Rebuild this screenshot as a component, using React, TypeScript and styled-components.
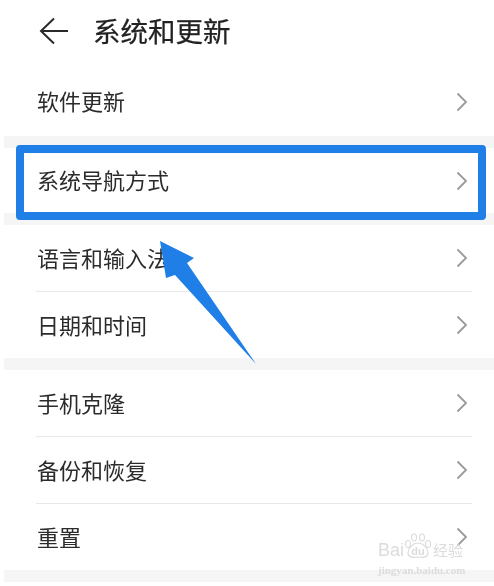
import React from "react";
import styled, { createGlobalStyle } from "styled-components";

const Global = createGlobalStyle`
  html, body { margin: 0; padding: 0; background: #fff; }
  #root { width: 494px; height: 586px; overflow: hidden; }
`;

const Page = styled.div`
  position: relative;
  width: 494px;
  height: 586px;
  background: #fff;
  overflow: hidden;
  font-family: "Noto Sans CJK SC", "Noto Sans", sans-serif;
  color: #262626;
  filter: blur(0.35px);
`;

const Header = styled.header`
  box-sizing: border-box;
  height: 67px;
  display: flex;
  align-items: center;
  padding-left: 39px;
  padding-bottom: 5px;
  gap: 24px;
`;

const Title = styled.h1`
  margin: 0;
  font-size: 27.5px;
  font-weight: 400;
  line-height: 1;
  color: #222;
  -webkit-text-stroke: 0.25px #222;
`;

const Band = styled.div<{ $h: number }>`
  height: ${(p) => p.$h}px;
  margin-left: 4px;
  background: #f5f5f5;
`;

const Row = styled.div<{ $h: number }>`
  position: relative;
  height: ${(p) => p.$h}px;
  display: flex;
  align-items: center;
  justify-content: space-between;
  margin-left: 37px;
  padding-right: 26px;
`;

const Divider = styled.div`
  height: 1px;
  margin-left: 36px;
  margin-right: 22px;
  background: #e8e8e8;
`;

const Label = styled.span`
  font-size: 22px;
  line-height: 1;
  color: #2b2b2b;
  padding-bottom: 3px;
`;

const Highlight = styled.div`
  position: absolute;
  left: -21px;
  right: 8px;
  top: -3px;
  bottom: -7px;
  box-sizing: border-box;
  border: 8px solid #1f7fe6;
  border-radius: 4px;
  pointer-events: none;
`;

const ArrowOverlay = styled.svg`
  position: absolute;
  left: 0;
  top: 0;
  pointer-events: none;
`;

const Watermark = styled.div`
  position: absolute;
  left: 378px;
  top: 533px;
  width: 112px;
  color: #dcdcdc;
  pointer-events: none;
`;

const MarkLine = styled.div`
  display: flex;
  align-items: flex-end;
  height: 26px;
  font-family: "Liberation Sans", sans-serif;
  font-size: 18px;
  line-height: 18px;
  white-space: nowrap;
`;

const MarkCn = styled.span`
  font-family: "Noto Sans CJK SC", sans-serif;
  font-size: 15px;
  line-height: 18px;
  margin-left: 1px;
`;

const MarkUrl = styled.div`
  font-family: "Liberation Serif", serif;
  font-size: 11px;
  font-weight: 700;
  line-height: 12px;
  margin-top: 5px;
  white-space: nowrap;
`;

const Chevron = () => (
  <svg width="12" height="20" viewBox="0 0 12 20" fill="none">
    <path d="M1.5 1.5l8.5 8.5-8.5 8.5" stroke="#9a9a9a" strokeWidth="1.8" />
  </svg>
);

const Back = () => (
  <svg width="30" height="28" viewBox="0 0 30 28" fill="none">
    <path d="M15 1.5L2 14l13 12.5M2 14h27" stroke="#2a2a2a" strokeWidth="2" />
  </svg>
);

const Paw = () => (
  <svg width="28" height="26" viewBox="0 0 28 26" fill="none" stroke="#dcdcdc" strokeWidth="1.2">
    <ellipse cx="4" cy="11" rx="2.5" ry="3.5" />
    <ellipse cx="10" cy="4.5" rx="2.5" ry="3.5" />
    <ellipse cx="18" cy="4.5" rx="2.5" ry="3.5" />
    <ellipse cx="24" cy="11" rx="2.5" ry="3.5" />
    <path d="M14 10c-5 0-10 5-10 10 0 4 4 5 10 4 6 1 10 0 10-4 0-5-5-10-10-10z" />
    <text x="14" y="22" textAnchor="middle" fontFamily="Liberation Sans" fontSize="11" fontWeight="700" fill="#dcdcdc" stroke="none">
      du
    </text>
  </svg>
);

const items2 = ["语言和输入法", "日期和时间"];
const items3 = ["手机克隆", "备份和恢复", "重置"];

const List = ({ items }: { items: string[] }) => (
  <>
    {items.map((t, i) => (
      <React.Fragment key={t}>
        {i > 0 && <Divider />}
        <Row $h={66}>
          <Label>{t}</Label>
          <Chevron />
        </Row>
      </React.Fragment>
    ))}
  </>
);

export default function App() {
  return (
    <Page>
      <Global />
      <Header>
        <Back />
        <Title>系统和更新</Title>
      </Header>
      <section>
        <Row $h={69}>
          <Label>软件更新</Label>
          <Chevron />
        </Row>
      </section>
      <Band $h={12} />
      <section>
        <Row $h={65}>
          <Highlight />
          <Label>系统导航方式</Label>
          <Chevron />
        </Row>
      </section>
      <Band $h={12} />
      <section>
        <List items={items2} />
      </section>
      <Band $h={12} />
      <section>
        <List items={items3} />
      </section>
      <Band $h={12} />
      <ArrowOverlay width="494" height="586" viewBox="0 0 494 586">
        <path d="M160 241L194 258L187 263L256 364L175 275L166 278Z" fill="#1f7fe6" />
      </ArrowOverlay>
      <Watermark>
        <MarkLine>
          Bai
          <Paw />
          <MarkCn>经验</MarkCn>
        </MarkLine>
        <MarkUrl>jingyan.baidu.com</MarkUrl>
      </Watermark>
    </Page>
  );
}
